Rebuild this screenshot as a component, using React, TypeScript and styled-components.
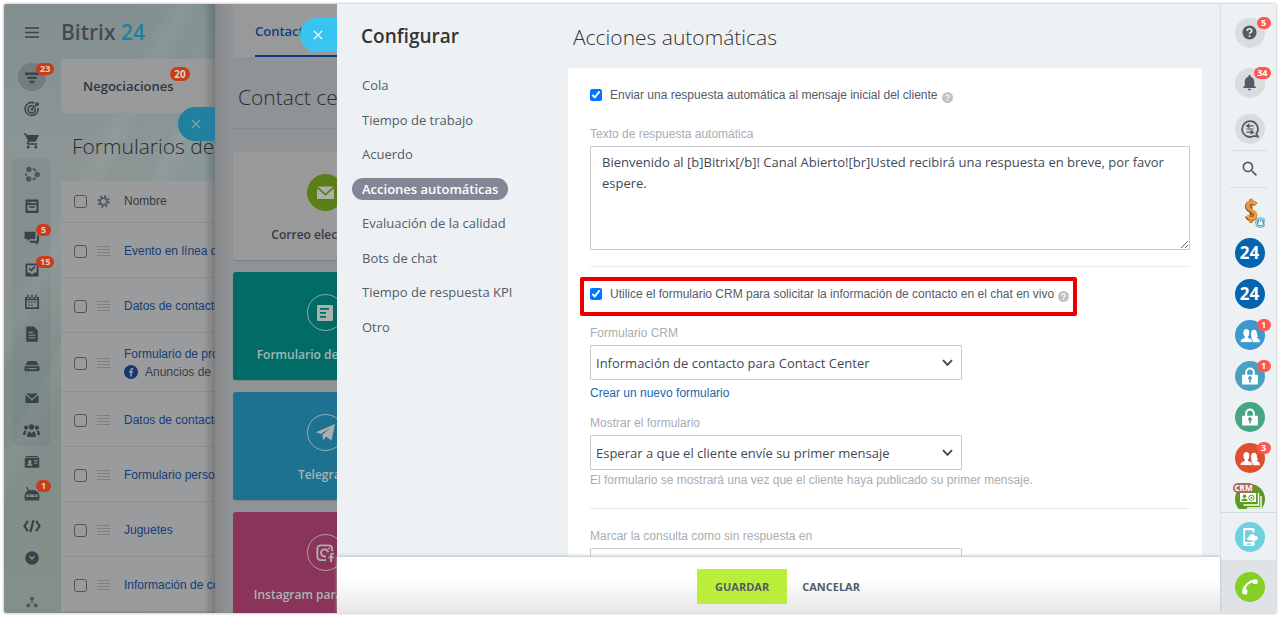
import React from "react";
import styled, { createGlobalStyle } from "styled-components";
import { MdShoppingCart, MdNotifications, MdSearch } from "react-icons/md";

const sans = `"Open Sans", "Noto Sans", sans-serif`;
const plain = `"Liberation Sans", Arial, sans-serif`;

const GlobalStyle = createGlobalStyle`
  * { box-sizing: border-box; }
  body { margin: 0; background: #fff; font-family: ${sans}; }
  button, a { font: inherit; }
`;

/* ---------- shell ---------- */

const Frame = styled.div`
  display: flex;
  height: calc(100vh - 8px);
  margin: 4px;
  overflow: hidden;
  box-shadow: 0 0 2px 1px #d0d2d3;
  border-radius: 2px;
`;

const Backdrop = styled.div`
  display: flex;
  flex: 0 0 211px;
  min-width: 0;
  background:
    linear-gradient(118deg, transparent 30%, rgba(255, 255, 255, 0.05) 34%, transparent 37%, transparent 44%, rgba(255, 255, 255, 0.05) 46%, transparent 50%),
    linear-gradient(90deg, transparent 60%, rgba(130, 158, 160, 0.3)),
    linear-gradient(180deg, #838e8f 0, #8c9595 22%, #8c9594 45%, #808d8a 62%, #858f89 100%);
`;

/* ---------- left navigation ---------- */

const Nav = styled.nav`
  display: flex;
  flex: 0 0 55px;
  flex-direction: column;
  align-items: center;
  margin-right: 2px;
`;

const NavHead = styled.div`
  display: flex;
  flex: 0 0 57px;
  align-items: center;
  justify-content: center;
  width: 39px;
`;

const NavGroup = styled.div`
  width: 39px;
  margin-top: 1px;
  border-radius: 6px;
  background: rgba(70, 90, 95, 0.09);
`;

const NavButton = styled.button`
  position: relative;
  display: flex;
  flex: 0 0 auto;
  align-items: center;
  justify-content: center;
  width: 39px;
  height: 32px;
  padding: 0;
  border: 0;
  background: transparent;
  color: #39424c;
`;

const NavDisc = styled.span`
  display: flex;
  align-items: center;
  justify-content: center;
  width: 28px;
  height: 28px;
  border-radius: 50%;
  background: #737d7e;
`;

const NavFoot = styled(NavButton)`
  height: 22px;
  margin-top: auto;
`;

const NavBadge = styled.span`
  position: absolute;
  top: 2px;
  left: 24px;
  min-width: 15px;
  height: 12px;
  padding: 0 4px;
  border-radius: 6px;
  background: #c83c18;
  color: #d5d5d5;
  font: 700 9px/12px ${sans};
  text-align: center;
`;

/* ---------- forms list page ---------- */

const ListPage = styled.section`
  position: relative;
  flex: 1;
  min-width: 0;
  overflow: hidden;
  white-space: nowrap;
`;

const Brand = styled.div`
  height: 55px;
  color: #444b50;
  font: 600 21px/56px ${sans};
  span { color: #207f9f; }
`;

const ListTabs = styled.div`
  display: flex;
  height: 54px;
  align-items: center;
  padding-left: 22px;
  background: #999b9b;
  color: #2f3640;
  font: 600 13px/20px ${sans};
`;

const TabLabel = styled.span`
  position: relative;
`;

const TabBadge = styled(NavBadge)`
  top: -9px;
  left: 87px;
  height: 14px;
  min-width: 20px;
  border-radius: 7px;
  font-size: 10px;
  line-height: 14px;
`;

const ListTitle = styled.h1`
  height: 68px;
  margin: 0;
  padding-left: 11px;
  color: #2b2b2b;
  font: 300 21px/66px ${sans};
`;

const ListTable = styled.table`
  width: 100%;
  min-width: 240px;
  border-collapse: collapse;
  background: #9a9b9c;
  font: 12px/18px ${plain};
  th, td { padding: 0; text-align: left; font-weight: 400; border-bottom: 1px solid #8e9091; }
  th { height: 41px; color: #343a42; }
  td { padding-top: 3px; color: #3b4047; }
  a { color: #173b76; text-decoration: none; }
`;

const FormRow = styled.tr<{ $tall?: boolean }>`
  height: ${(p) => (p.$tall ? 59 : 55)}px;
`;

const CheckCell = styled.td`
  width: 36px;
  line-height: 0;
`;
const CheckHead = styled.th`
  width: 36px;
  line-height: 0;
`;

const HandleCell = styled.td`
  width: 27px;
  svg { display: block; }
`;
const HandleHead = styled.th`
  width: 27px;
  svg { display: block; }
`;

const RowCheck = styled.input`
  appearance: none;
  width: 13px;
  height: 13px;
  margin: 0 0 0 13px;
  border: 1px solid #505357;
  border-radius: 3px;
`;

const SubLine = styled.div`
  display: flex;
  align-items: center;
  gap: 7px;
  height: 18px;
`;

const DimEdge = styled.div`
  position: absolute;
  inset: 0 0 0 auto;
  width: 12px;
  background: linear-gradient(90deg, rgba(0, 0, 0, 0), rgba(0, 0, 0, 0.2));
`;

const CloseTab = styled.button<{ $top: number; $dim?: boolean }>`
  position: absolute;
  top: ${(p) => p.$top}px;
  right: 0;
  display: flex;
  align-items: center;
  justify-content: center;
  width: 37px;
  height: 34px;
  padding: 0 2px 0 0;
  border: 0;
  border-radius: 17px 0 0 17px;
  background: ${(p) => (p.$dim ? "#217f9f" : "rgba(53, 199, 245, 0.96)")};
  color: ${(p) => (p.$dim ? "#8fa5ad" : "#fff")};
`;

/* ---------- contact center slider ---------- */

const Center = styled.section`
  position: relative;
  flex: 0 0 122px;
  overflow: hidden;
  padding-left: 18px;
  background: linear-gradient(90deg, #858789 0, #909395 14px);
  white-space: nowrap;
`;

const CenterTabs = styled.div`
  width: 300px;
  height: 53px;
  padding-left: 22px;
  background: #98999a;
`;

const CenterTab = styled.a`
  display: block;
  height: 53px;
  border-bottom: 2px solid #083b82;
  color: #0b3f88;
  font: 600 13px/54px ${sans};
  text-decoration: none;
`;

const CenterTitle = styled.h2`
  width: 300px;
  height: 72px;
  margin: 0 0 23px;
  padding-left: 5px;
  border-bottom: 1px solid #868a8d;
  color: #2b2b2b;
  font: 300 21px/80px ${sans};
`;

const Channel = styled.div<{ $bg: string; $light?: boolean }>`
  display: flex;
  flex-direction: column;
  align-items: center;
  gap: 14px;
  width: 184px;
  height: 108px;
  margin-bottom: 12px;
  padding-top: 22px;
  border-radius: 3px;
  background: ${(p) => p.$bg};
  box-shadow: 0 1px 1px rgba(0, 0, 0, 0.12);
  color: ${(p) => (p.$light ? "#353b44" : "#a9b4b5")};
  font: 600 12px/20px ${sans};
`;

const ChannelDisc = styled.span<{ $solid?: boolean }>`
  display: flex;
  align-items: center;
  justify-content: center;
  width: 37px;
  height: 37px;
  border: 1px solid ${(p) => (p.$solid ? "#5a7f17" : "rgba(190, 200, 200, 0.7)")};
  border-radius: 50%;
  background: ${(p) => (p.$solid ? "#5a7f17" : "transparent")};
  color: #acb0ac;
`;

/* ---------- settings slider ---------- */

const Settings = styled.section`
  display: flex;
  flex: 1;
  flex-direction: column;
  min-width: 0;
  background: #edf1f4;
`;

const SettingsBody = styled.div`
  display: flex;
  flex: 1;
  min-height: 0;
  overflow: hidden;
`;

const Menu = styled.aside`
  flex: 0 0 231px;
  padding-left: 15px;
`;

const MenuTitle = styled.h2`
  height: 70px;
  margin: 0;
  padding-left: 9px;
  color: #333;
  font: 600 19px/64px ${sans};
`;

const MenuList = styled.ul`
  display: flex;
  flex-direction: column;
  align-items: flex-start;
  justify-content: space-between;
  height: 264px;
  margin: 0;
  padding: 0;
  list-style: none;
`;

const MenuLink = styled.a<{ $active?: boolean }>`
  display: block;
  height: 22px;
  padding: 0 ${(p) => (p.$active ? 10 : 0)}px 0 10px;
  border-radius: 11px;
  background: ${(p) => (p.$active ? "#828795" : "transparent")};
  color: ${(p) => (p.$active ? "#fff" : "#535c69")};
  font: ${(p) => (p.$active ? 600 : 400)} 13px/22px ${sans};
  text-decoration: none;
`;

const Content = styled.main`
  flex: 1;
  min-width: 0;
  padding-right: 18px;
`;

const ContentTitle = styled.h1`
  height: 64px;
  margin: 0;
  padding-left: 5px;
  color: #333;
  font: 300 21px/66px ${sans};
`;

const Card = styled.div`
  padding: 19px 12px 40px 22px;
  background: #fff;
`;

const Check = styled.label`
  display: flex;
  align-items: center;
  height: 16px;
  color: #535c69;
  font: 12px/16px ${plain};
  white-space: nowrap;
  input { flex: none; width: 12px; height: 12px; margin: 0 8px 0 0; }
  svg { flex: none; margin: 4px 0 0 4px; }
`;

const Highlight = styled.div`
  width: 497px;
  max-width: 100%;
  margin: 10px 0 9px -10px;
  padding: 5px 0 10px 6px;
  border: 4px solid #e60000;
  border-radius: 2px;
`;

const Field = styled.div<{ $gap?: number }>`
  display: flex;
  flex-direction: column;
  align-items: flex-start;
  margin-top: ${(p) => p.$gap ?? 0}px;
`;

const FieldLabel = styled.label`
  margin-bottom: 4px;
  color: #a8adb4;
  font: 12px/16px ${plain};
`;

const TextArea = styled.textarea`
  width: 100%;
  height: 104px;
  padding: 5px 11px;
  border: 1px solid #c4cbd1;
  border-radius: 1px;
  outline: 0;
  color: #424956;
  font: 13px/21px ${sans};
`;

const Rule = styled.hr`
  height: 1px;
  margin: 16px 0 0;
  border: 0;
  background: #e8eaeb;
`;

const SelectWrap = styled.div`
  position: relative;
  width: 372px;
  max-width: 100%;
  svg { position: absolute; top: 14px; right: 9px; pointer-events: none; }
`;

const Select = styled.select`
  appearance: none;
  display: block;
  width: 100%;
  height: 35px;
  padding: 0 30px 0 5px;
  border: 1px solid #c4cbd1;
  border-radius: 1px;
  background: #fff;
  color: #424956;
  font: 13px/20px ${sans};
`;

const FormLink = styled.a`
  margin-top: 5px;
  color: #2067b0;
  font: 12px/16px ${plain};
  text-decoration: none;
`;

const Hint = styled.p`
  margin: 2px 0 4px;
  color: #a8adb4;
  font: 12px/16px ${plain};
`;

const Footer = styled.footer`
  position: relative;
  display: flex;
  flex: 0 0 56px;
  align-items: center;
  justify-content: center;
  gap: 15px;
  padding-top: 3px;
  background: linear-gradient(180deg, #fff 40%, #e6e6e6);
  box-shadow: 0 -1px 3px #b9c0c6;
`;

const FooterButton = styled.button<{ $primary?: boolean }>`
  height: 35px;
  padding: 0 ${(p) => (p.$primary ? 18 : 0)}px;
  border: 0;
  border-radius: 1px;
  background: ${(p) => (p.$primary ? "#bbed3b" : "transparent")};
  color: #535c69;
  font: 700 11px/35px ${sans};
`;

/* ---------- right bar ---------- */

const Bar = styled.aside`
  display: flex;
  flex: 0 0 56px;
  flex-direction: column;
  align-items: center;
  border-left: 1px solid #dce2e5;
  background: #edf1f4;
`;

const BarSection = styled.div<{ $h: number; $line?: boolean }>`
  display: flex;
  flex: 0 0 ${(p) => p.$h}px;
  flex-direction: column;
  align-items: center;
  justify-content: center;
  gap: 16px;
  width: 38px;
  border-bottom: ${(p) => (p.$line ? "1px solid #dadfe2" : "0")};
`;

const BarApps = styled.div`
  display: flex;
  flex: 1;
  flex-direction: column;
  align-items: center;
  gap: 11px;
  width: 100%;
  min-height: 0;
  padding-top: 9px;
  overflow: hidden;
  border-bottom: 3px solid #edf1f4;
`;

const BarBottom = styled.div<{ $shade?: boolean }>`
  display: flex;
  flex: 0 0 ${(p) => (p.$shade ? 53 : 48)}px;
  align-items: center;
  justify-content: center;
  width: 100%;
  border-top: ${(p) => (p.$shade ? "0" : "1px solid #d3dee2")};
  background: ${(p) => (p.$shade ? "#dfe3e7" : "transparent")};
`;

const BarButton = styled.button<{ $bg?: string }>`
  position: relative;
  display: flex;
  flex: 0 0 30px;
  align-items: center;
  justify-content: center;
  width: 30px;
  height: 30px;
  margin-left: 2px;
  padding: 0;
  border: 0;
  border-radius: 50%;
  background: ${(p) => p.$bg ?? "transparent"};
  color: ${(p) => (p.$bg && p.$bg !== "#d9dde0" ? "#fff" : "#525c69")};
  font: 700 17px/30px ${sans};
`;

const BarBadge = styled.span`
  position: absolute;
  top: -1px;
  right: -6px;
  min-width: 14px;
  height: 12px;
  padding: 0 3px;
  border-radius: 6px;
  background: #ff5752;
  color: #fff;
  font: 700 9px/12px ${sans};
  text-align: center;
`;

const CrmTag = styled.span`
  position: absolute;
  top: -1px;
  left: -2px;
  height: 10px;
  padding: 0 2px;
  border-radius: 5px;
  background: #ad6b57;
  color: #fff;
  font: 700 8px/10px ${sans};
`;

/* ---------- drawings ---------- */

const Svg = ({ size = 16, children }: { size?: number; children: React.ReactNode }) => (
  <svg width={size} height={size} viewBox="0 0 16 16" fill="currentColor" aria-hidden="true">
    {children}
  </svg>
);

const stroke = { fill: "none", stroke: "currentColor" };

const HamburgerIcon = () => (
  <Svg><path d="M1 3h14M1 7.500h14M1 12h14" {...stroke} strokeWidth="1.400" /></Svg>
);
const FilterIcon = () => (
  <Svg><path d="M1 3.500h14v2.400H1zM3.300 7.700h9.400V10H3.300zM5.700 11.800h4.600v2.200H5.700z" /></Svg>
);
const TargetIcon = () => (
  <Svg>
    <g {...stroke} strokeWidth="1.500">
      <path d="M10.300 2A6.500 6.500 0 1 0 14 6.800" />
      <path d="M9.600 5.200a3.700 3.700 0 1 0 1.600 2" />
      <path d="M7.800 8.600 13 3" />
    </g>
    <circle cx="7.800" cy="8.500" r="1.300" />
    <path d="M11.300 4.600V2.600L13.600.5l.4 1.800 1.700.4-2.100 2.200z" />
  </Svg>
);
const ShareIcon = () => (
  <Svg>
    <g opacity="0.75">
      <circle cx="4.900" cy="3.400" r="2.700" /><circle cx="13.200" cy="8.600" r="2.700" /><circle cx="4.600" cy="13" r="2.700" />
      <path d="M8.800 2.900 12.400 4.800M2 7v2.800M8.800 13.600l3-1.500" {...stroke} strokeWidth="1.800" />
    </g>
  </Svg>
);
const FormIcon = () => (
  <Svg><path fillRule="evenodd" d="M1.500 1.500h13V15h-13zM3.400 3.700v1.600h1.400V3.700zm2.600 0v1.600h6.600V3.700zM3.400 7v5.700h9.200V7zM5.200 8.200h5.600v1.600H5.200z" /></Svg>
);
const ChatIcon = () => (
  <Svg><path d="M1.300 1.800h9.400q.8 0 .8.8v5.600q0 .8-.8.8H5.800L3.400 11.400V9H1.300q-.8 0-.8-.8V2.600q0-.8.8-.8zM13 5.200h1.200q.8 0 .8.8v6q0 .8-.8.8h-.8v2.300L11 12.800H6.700q-.8 0-.8-.8v-1.300H12q1 0 1-1z" /></Svg>
);
const TaskIcon = () => (
  <Svg><path fillRule="evenodd" d="M1.500 1.500h13v13h-13zM3.300 3.300v7.200h2.500q.5 1.800 2.200 1.800t2.200-1.800h2.500V3.300z" /><path d="m5.300 6.300 2 2L11 4.600" {...stroke} strokeWidth="1.700" /></Svg>
);
const CalendarIcon = () => (
  <Svg>
    <path fillRule="evenodd" d="M1 3h2v1.700h2V3h1.500v1.700h3V3H11v1.700h2V3h2v12H1zM2.700 6.200v7.100h10.600V6.200z" />
    <path d="M3.300.8h1.400V4H3.300zM7.300.8h1.400V4H7.300zM11.300.8h1.400V4h-1.400zM4.500 7.600H6v1.500H4.500zM7.200 7.600h1.500v1.500H7.200zM10 7.600h1.500v1.500H10zM4.500 10.400H6v1.500H4.500zM7.200 10.400h1.500v1.500H7.200z" />
  </Svg>
);
const DocIcon = () => (
  <Svg><path fillRule="evenodd" d="M3 .6h7l3.800 3.800V15q0 .8-.8.800H3q-.8 0-.8-.8V1.400Q2.200.6 3 .6zM4.700 5.800V7H9V5.800zm0 2.700v1.200h6.600V8.500zm0 2.700v1.200h6.600v-1.200z" /></Svg>
);
const DriveIcon = () => (
  <Svg><path d="M3.800 3h8.400L14.500 7.200H1.500z" /><path fillRule="evenodd" d="M.5 8.200h15V12q0 1.200-1.200 1.200H1.700Q.5 13.200.5 12zM2.500 10v1.300h1.300V10zm2.500 0v1.300h7.500V10z" /></Svg>
);
const MailIcon = ({ size = 16 }: { size?: number }) => (
  <Svg size={size}><path d="M2 3.500h12L8 8.800zM1.500 4.800 8 10.500l6.500-5.700V13h-13z" /></Svg>
);
const TeamIcon = () => (
  <Svg size={17}>
    <circle cx="8" cy="4.600" r="2.600" /><path d="M4 14q-.3-4 2-5.200l2 1.800 2-1.800q2.300 1.200 2 5.200z" />
    <circle cx="2.900" cy="5.300" r="1.900" /><circle cx="13.100" cy="5.300" r="1.900" />
    <path d="M0 12.300q-.2-3.300 1.800-4.500l1.400 1q-.8 1.400-.7 3.500zM16 12.300q.2-3.300-1.800-4.500l-1.400 1q.8 1.400.7 3.500z" />
  </Svg>
);
const IdIcon = () => (
  <Svg>
    <path d="M2 2h12v1H2z" />
    <path fillRule="evenodd" d="M.8 3.800h14.400v10H.8zM3 11.800h5.500q0-1.800-1.700-2.200.8-.7.8-1.900 0-1.800-1.800-1.800T4 7.700q0 1.200.8 1.900Q3 10 3 11.800zM10 6v1.200h3.300V6zm0 2.500v1.200h3.300V8.500z" />
  </Svg>
);
const RobotIcon = () => (
  <Svg>
    <path d="M2.800 1 4.600 5" {...stroke} strokeWidth="1.200" />
    <path fillRule="evenodd" d="M.6 9.500Q1.500 4 8 4t7.400 5.500V13q0 1.500-1.500 1.500H2.100Q.6 14.500.6 13zM3 8.500q-.8 0-.8 1.200T3 10.900h10q.8 0 .8-1.200T13 8.500z" />
    <circle cx="5.300" cy="9.700" r=".8" /><circle cx="10.700" cy="9.700" r=".8" />
  </Svg>
);
const CodeIcon = () => (
  <Svg size={18}><path d="M4.300 3.500 1.300 8l3 4.500M11.700 3.500l3 4.500-3 4.500M9.400 2.800 6.600 13.200" {...stroke} strokeWidth="1.900" /></Svg>
);
const DownIcon = () => (
  <Svg><path fillRule="evenodd" d="M8 1.200a6.800 6.800 0 1 1 0 13.600A6.800 6.800 0 0 1 8 1.200zM4.900 6.500 8 9.900l3.100-3.400-1-.9L8 7.700 5.900 5.600z" /></Svg>
);
const OrgIcon = () => (
  <Svg size={12}><g opacity="0.75"><circle cx="8" cy="3.500" r="2.600" /><circle cx="3" cy="12.500" r="2.600" /><circle cx="13" cy="12.500" r="2.600" /><path d="M8 4v4L3.300 12M8 8l4.700 4" {...stroke} /></g></Svg>
);
const CloseIcon = () => (
  <Svg size={12}><path d="m2.500 2.500 11 11m0-11-11 11" {...stroke} strokeWidth="1.700" /></Svg>
);
const GearIcon = () => (
  <svg width="13" height="13" viewBox="0 0 16 16" aria-hidden="true">
    <circle cx="8" cy="8" r="4.200" fill="none" stroke="#55595e" strokeWidth="2.200" />
    <circle cx="8" cy="8" r="6.400" fill="none" stroke="#55595e" strokeWidth="2.600" strokeDasharray="2.500 2.530" />
  </svg>
);
const HandleIcon = () => (
  <svg width="13" height="10" viewBox="0 0 13 10" aria-hidden="true"><path d="M0 .5h13M0 3.500h13M0 6.500h13M0 9.500h13" stroke="#7d8083" /></svg>
);
const FacebookDot = () => (
  <svg width="14" height="14" viewBox="0 0 14 14" aria-hidden="true">
    <circle cx="7" cy="7" r="7" fill="#17386c" />
    <path d="M6.300 11.500V7.700H5V6.200h1.300V5q0-1.900 1.900-1.900h1v1.400h-.7q-.7 0-.7.700v1h1.400l-.2 1.500H7.800v3.800z" fill="#9aa3b0" />
  </svg>
);
const HelpDot = () => (
  <svg width="11" height="11" viewBox="0 0 16 16" aria-hidden="true">
    <circle cx="8" cy="8" r="8" fill="#bfc2c6" />
    <path d="M5.600 6.300q0-2.300 2.400-2.300t2.400 2q0 1.200-1.200 1.900Q8 8.500 8 9.500M8 11v1.700" fill="none" stroke="#fff" strokeWidth="1.700" />
  </svg>
);
const Chevron = () => (
  <svg width="11" height="8" viewBox="0 0 11 8" aria-hidden="true"><path d="m1 1.200 4.500 4.600L10 1.200" fill="none" stroke="#424956" strokeWidth="1.900" /></svg>
);
const WebFormIcon = () => (
  <Svg size={16}><path fillRule="evenodd" d="M1 0h14q1 0 1 1v14q0 1-1 1H1q-1 0-1-1V1q0-1 1-1zM3 3v1.700h9V3zm0 4v1.700h6V7zm0 4v1.700h6V11z" /></Svg>
);
const PlaneIcon = () => (
  <Svg size={19}><path d="M0 7.800 16 .8 13 14.800 8.300 11.300 6.200 14.700 5.300 9.800 12.500 4 4 9.200z" /></Svg>
);
const InstagramIcon = () => (
  <Svg size={18}>
    <path d="M9 14.300H4.500Q1.200 14.300 1.200 11V4.500q0-3.300 3.300-3.300H11q3.300 0 3.300 3.300v2" {...stroke} strokeWidth="1.700" />
    <path d="M8.800 10.900a3.200 3.200 0 1 1 2-3.600" {...stroke} strokeWidth="1.700" />
    <circle cx="11.700" cy="4" r=".9" />
    <path d="M12.500 16v-3.300h-1.400V11h1.400V9.800q0-2 2-2H16v1.600h-.9q-.8 0-.8.800v.8H16l-.2 1.700h-1.500V16z" />
  </Svg>
);
const HelpIcon = () => (
  <Svg size={15}>
    <circle cx="8" cy="8" r="7.500" />
    <path d="M5.600 6.300q0-2.300 2.400-2.300t2.400 2q0 1.200-1.200 1.900Q8 8.500 8 9.600M8 11v1.700" fill="none" stroke="#edf1f4" strokeWidth="1.700" />
  </Svg>
);
const MessagesIcon = () => (
  <Svg size={18}>
    <path d="M13.600 12.300A7 7 0 1 0 11.400 14.200L15 14.800z" {...stroke} strokeWidth="1.600" />
    <path d="M5.500 5.200h5.700M4.800 8h6.400M4.800 10.800h5.700M4.800 5.200 7 3.800v2.800zM11.200 10.800 9 9.400v2.800z" {...stroke} strokeWidth="1" />
  </Svg>
);
const LockIcon = () => (
  <Svg size={18}>
    <path d="M4.600 7V4.800a3.400 3.400 0 0 1 6.800 0V7" {...stroke} strokeWidth="1.800" />
    <path fillRule="evenodd" d="M1 6.800h14v8.800H1zM7.300 11.300v2.500h1.400v-2.500a1.600 1.600 0 1 0-1.400 0z" />
  </Svg>
);
const DollarIcon = () => (
  <svg width="30" height="32" viewBox="0 0 30 32" aria-hidden="true">
    <path d="M16 3v24" stroke="#b0622a" strokeWidth="3" />
    <path d="M21 8.600Q18.500 6 15.500 6.700 11.300 8 12.500 11.800q1 2.200 4.200 3.600 4.300 2 3.200 5.300-1.200 2.800-4.400 2.300-2.500-.5-3.700-3" fill="none" stroke="#8a5424" strokeWidth="4.400" />
    <path d="M21 8.200Q18.500 5.600 15.800 6.300 11.800 7.600 13 11.400q1 2.200 4.200 3.600 4.300 2 3.200 5.300-1.200 2.800-4.400 2.300-2.500-.5-3.700-3" fill="none" stroke="#f09b3c" strokeWidth="3.200" />
    <path d="M16.500 2.500v3M15.500 23.500v3" stroke="#e88f35" strokeWidth="2.400" />
    <circle cx="25.500" cy="26.500" r="5.300" fill="#4aa3bf" />
    <circle cx="25.500" cy="26.500" r="4.200" fill="none" stroke="#dff0f5" strokeWidth="0.700" />
    <path d="M23.500 26h4v3h-4z" fill="#fff" />
    <path d="M24.300 26v-1a1.200 1.200 0 0 1 2.400 0v1" fill="none" stroke="#fff" strokeWidth="0.900" />
  </svg>
);
const ContactsIcon = () => (
  <svg width="26" height="30" viewBox="0 0 26 30" aria-hidden="true">
    <path d="M24 12v12H10M21.500 9v12H6.500" fill="none" stroke="#fff" strokeWidth="1.400" />
    <path d="M3 9h16v9H3z" fill="#fff" />
    <circle cx="7.500" cy="12.300" r="1.700" fill="#5b9b1f" />
    <path d="M4.300 17q.2-2.600 3.200-2.600t3.200 2.600z" fill="#5b9b1f" />
    <circle cx="14.500" cy="13.800" r="2.700" fill="none" stroke="#5b9b1f" strokeWidth="1" />
    <circle cx="14.500" cy="13.800" r="1" fill="#5b9b1f" />
  </svg>
);
const UsersIcon = ({ ring }: { ring: string }) => (
  <svg width="20" height="17" viewBox="0 0 22 18" fill="currentColor" aria-hidden="true">
    <path d="M10 16.300q1-2.500 3-4.500-1-2-.8-5.300.2-3.700 3.200-3.700t3.200 3.700q0 1.800 1.200 4-1 1-2.100 1.100 4.300 1 4.300 4.700z" />
    <path d="M0 16.800q0-4.200 4.800-5.400v-1Q3.200 9 3.200 6 3.400 1.500 7 1.500T10.800 6q0 3-1.600 4.400v1q4.800 1.200 4.800 5.400z" stroke={ring} strokeWidth="1" />
  </svg>
);
const MobileIcon = () => (
  <Svg size={18}>
    <path fillRule="evenodd" d="M3 0h8q1 0 1 1v3h-1.600V2H3.600v10.500h6.800V11H12v4q0 1-1 1H3q-1 0-1-1V1q0-1 1-1zM5 13.800v1h4v-1z" />
    <path d="M7.500 11q-2 0-2-1.700 0-1.500 1.700-1.600.4-2.300 2.700-2.300 2 0 2.600 1.800 2.500 0 2.500 2T13 11z" />
  </Svg>
);
const PhoneIcon = () => (
  <Svg size={18}><path d="M1 12.500q0-4 4-7.800 4-3.700 8.300-3.700 1.200 0 1.400 1.300l.2 1.600q0 1-1 1.200l-2.300.3q-.9 0-1.200-1l-.2-.7Q7.500 4.500 6 6.200 4.500 8 4.200 10l.8.2q.9.300.8 1.300L5.500 13.700q-.2 1-1.200 1l-1.700-.1Q1 14.500 1 12.500z" /></Svg>
);

/* ---------- data ---------- */

type Item = { name: string; icon: React.ReactNode; badge?: string };

const groupItems: Item[] = [
  { name: "Automatización", icon: <ShareIcon /> },
  { name: "Formularios", icon: <FormIcon /> },
  { name: "Chat", icon: <ChatIcon />, badge: "5" },
  { name: "Tareas", icon: <TaskIcon />, badge: "15" },
  { name: "Calendario", icon: <CalendarIcon /> },
  { name: "Documentos", icon: <DocIcon /> },
  { name: "Drive", icon: <DriveIcon /> },
  { name: "Correo", icon: <MailIcon /> },
  { name: "Grupos", icon: <TeamIcon /> },
];

const moreItems: Item[] = [
  { name: "Empresa", icon: <IdIcon /> },
  { name: "Robots", icon: <RobotIcon />, badge: "1" },
  { name: "Desarrolladores", icon: <CodeIcon /> },
  { name: "Más", icon: <DownIcon /> },
];

const forms = [
  { name: "Evento en línea de" },
  { name: "Datos de contacto" },
  { name: "Formulario de productos", source: "Anuncios de Facebook" },
  { name: "Datos de contacto" },
  { name: "Formulario personalizado" },
  { name: "Juguetes" },
  { name: "Información de contacto" },
];

const channels = [
  { name: "Correo electrónico", bg: "#9a9a9b", light: true, icon: <MailIcon size={21} /> },
  { name: "Formulario de sitio web", bg: "#006c65", icon: <WebFormIcon /> },
  { name: "Telegram", bg: "#1d7292", icon: <PlaneIcon /> },
  { name: "Instagram para Empresa", bg: "#8a3459", icon: <InstagramIcon /> },
];

const menu = [
  "Cola",
  "Tiempo de trabajo",
  "Acuerdo",
  "Acciones automáticas",
  "Evaluación de la calidad",
  "Bots de chat",
  "Tiempo de respuesta KPI",
  "Otro",
];

const NavItem = ({ name, icon, badge }: Item) => (
  <NavButton aria-label={name}>
    {icon}
    {badge && <NavBadge>{badge}</NavBadge>}
  </NavButton>
);

export default function App() {
  return (
    <>
      <GlobalStyle />
      <Frame>
        <Backdrop>
          <Nav>
            <NavHead><NavButton aria-label="Menú"><HamburgerIcon /></NavButton></NavHead>
            <NavItem name="CRM" icon={<NavDisc><FilterIcon /></NavDisc>} badge="23" />
            <NavItem name="Marketing" icon={<TargetIcon />} />
            <NavItem name="Tienda" icon={<MdShoppingCart size={18} />} />
            <NavGroup>{groupItems.map((i) => <NavItem key={i.name} {...i} />)}</NavGroup>
            {moreItems.map((i) => <NavItem key={i.name} {...i} />)}
            <NavFoot aria-label="Estructura"><OrgIcon /></NavFoot>
          </Nav>
          <ListPage>
            <Brand>Bitrix <span>24</span></Brand>
            <ListTabs><TabLabel>Negociaciones<TabBadge>20</TabBadge></TabLabel></ListTabs>
            <ListTitle>Formularios de</ListTitle>
            <ListTable>
              <thead>
                <tr>
                  <CheckHead><RowCheck type="checkbox" aria-label="Seleccionar todo" /></CheckHead>
                  <HandleHead><GearIcon /></HandleHead>
                  <th>Nombre</th>
                </tr>
              </thead>
              <tbody>
                {forms.map((f, i) => (
                  <FormRow key={i} $tall={!!f.source}>
                    <CheckCell><RowCheck type="checkbox" aria-label={f.name} /></CheckCell>
                    <HandleCell><HandleIcon /></HandleCell>
                    <td>
                      <a href="#form">{f.name}</a>
                      {f.source && <SubLine><FacebookDot />{f.source}</SubLine>}
                    </td>
                  </FormRow>
                ))}
              </tbody>
            </ListTable>
            <DimEdge />
            <CloseTab $top={103} $dim aria-label="Cerrar"><CloseIcon /></CloseTab>
          </ListPage>
        </Backdrop>

        <Center>
          <CenterTabs><CenterTab href="#center">Contact center</CenterTab></CenterTabs>
          <CenterTitle>Contact center</CenterTitle>
          {channels.map((c) => (
            <Channel key={c.name} $bg={c.bg} $light={c.light}>
              <ChannelDisc $solid={c.light}>{c.icon}</ChannelDisc>
              {c.name}
            </Channel>
          ))}
          <CloseTab $top={14} aria-label="Cerrar"><CloseIcon /></CloseTab>
        </Center>

        <Settings>
          <SettingsBody>
            <Menu>
              <MenuTitle>Configurar</MenuTitle>
              <MenuList>
                {menu.map((m, i) => (
                  <li key={m}><MenuLink href="#section" $active={i === 3}>{m}</MenuLink></li>
                ))}
              </MenuList>
            </Menu>
            <Content>
              <ContentTitle>Acciones automáticas</ContentTitle>
              <Card>
                <Check>
                  <input type="checkbox" defaultChecked />
                  Enviar una respuesta automática al mensaje inicial del cliente
                  <HelpDot />
                </Check>
                <Field $gap={23}>
                  <FieldLabel htmlFor="reply">Texto de respuesta automática</FieldLabel>
                  <TextArea
                    id="reply"
                    spellCheck={false}
                    defaultValue="Bienvenido al [b]Bitrix[/b]! Canal Abierto![br]Usted recibirá una respuesta en breve, por favor espere."
                  />
                </Field>
                <Rule />
                <Highlight>
                  <Check>
                    <input type="checkbox" defaultChecked />
                    Utilice el formulario CRM para solicitar la información de contacto en el chat en vivo
                    <HelpDot />
                  </Check>
                </Highlight>
                <Field>
                  <FieldLabel htmlFor="crm-form">Formulario CRM</FieldLabel>
                  <SelectWrap>
                    <Select id="crm-form"><option>Información de contacto para Contact Center</option></Select>
                    <Chevron />
                  </SelectWrap>
                  <FormLink href="#new">Crear un nuevo formulario</FormLink>
                </Field>
                <Field $gap={14}>
                  <FieldLabel htmlFor="show-form">Mostrar el formulario</FieldLabel>
                  <SelectWrap>
                    <Select id="show-form"><option>Esperar a que el cliente envíe su primer mensaje</option></Select>
                    <Chevron />
                  </SelectWrap>
                  <Hint>El formulario se mostrará una vez que el cliente haya publicado su primer mensaje.</Hint>
                </Field>
                <Rule />
                <Field $gap={19}>
                  <FieldLabel htmlFor="unanswered">Marcar la consulta como sin respuesta en</FieldLabel>
                  <SelectWrap>
                    <Select id="unanswered"><option /></Select>
                  </SelectWrap>
                </Field>
              </Card>
            </Content>
          </SettingsBody>
          <Footer>
            <FooterButton $primary>GUARDAR</FooterButton>
            <FooterButton>CANCELAR</FooterButton>
          </Footer>
        </Settings>

        <Bar>
          <BarSection $h={57}>
            <BarButton $bg="#d9dde0" aria-label="Ayuda"><HelpIcon /><BarBadge>5</BarBadge></BarButton>
          </BarSection>
          <BarSection $h={90} $line>
            <BarButton $bg="#d9dde0" aria-label="Notificaciones"><MdNotifications size={19} /><BarBadge>34</BarBadge></BarButton>
            <BarButton $bg="#d9dde0" aria-label="Mensajes"><MessagesIcon /></BarButton>
          </BarSection>
          <BarSection $h={37} $line>
            <BarButton aria-label="Buscar"><MdSearch size={20} /></BarButton>
          </BarSection>
          <BarApps>
            <BarButton aria-label="Ventas"><DollarIcon /></BarButton>
            <BarButton $bg="#0465ae">24</BarButton>
            <BarButton $bg="#0465ae">24</BarButton>
            <BarButton $bg="#3c98cd" aria-label="Grupo de clientes"><UsersIcon ring="#3c98cd" /><BarBadge>1</BarBadge></BarButton>
            <BarButton $bg="#48a1bf" aria-label="Chat privado"><LockIcon /><BarBadge>1</BarBadge></BarButton>
            <BarButton $bg="#47a583" aria-label="Canal privado"><LockIcon /></BarButton>
            <BarButton $bg="#dd4f2e" aria-label="Equipo"><UsersIcon ring="#dd4f2e" /><BarBadge>3</BarBadge></BarButton>
            <BarButton $bg="#5b9b1f"><ContactsIcon /><CrmTag>CRM</CrmTag></BarButton>
          </BarApps>
          <BarBottom><BarButton $bg="#6fd0df" aria-label="Aplicación móvil"><MobileIcon /></BarButton></BarBottom>
          <BarBottom $shade><BarButton $bg="#85cf26" aria-label="Llamar"><PhoneIcon /></BarButton></BarBottom>
        </Bar>
      </Frame>
    </>
  );
}
